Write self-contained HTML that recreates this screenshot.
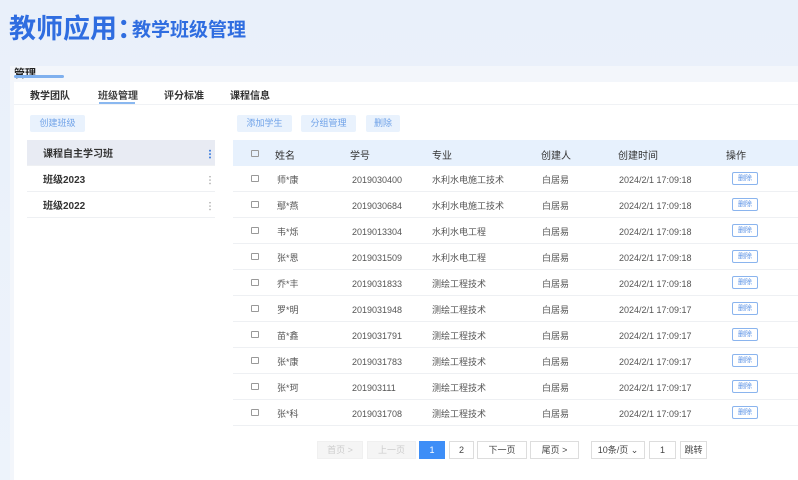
<!DOCTYPE html>
<html><head><meta charset="utf-8"><style>
*{margin:0;padding:0;box-sizing:border-box}
body{width:798px;height:480px;overflow:hidden;background:linear-gradient(180deg,#e9f0fa,#edf3fb);font-family:"Liberation Sans","Noto Sans CJK SC",sans-serif;position:relative;color:#333;line-height:1}
.a{position:absolute}
.t1{left:9px;top:15px;font-size:27px;line-height:28px;font-weight:bold;color:#2f6de0}
.t2{left:132px;top:21px;font-size:19px;line-height:20px;font-weight:bold;color:#2f6de0}
.panel{left:10px;top:66px;width:788px;height:414px;background:#f3f6fb}
.card{left:14px;top:82px;width:784px;height:398px;background:#fff}
.btn{position:absolute;height:17px;background:#e9f2fd;color:#6fa2e8;font-size:9px;line-height:17px;text-align:center;border-radius:2px}
.tab{position:absolute;top:91px;font-size:10px;line-height:11px;font-weight:bold;color:#333}
.row{position:absolute;left:233px;width:565px;height:26px;border-bottom:1px solid #eef0f3;font-size:9px;color:#555}
.row span{position:absolute;top:9px;line-height:10px}
.cb{position:absolute;left:18px;top:9px;width:8px;height:7px;border:1px solid #999;border-radius:1px}
.del{position:absolute;left:499px;top:6px;width:26px;height:13px;border:1px solid #8ab4ee;border-radius:2px;color:#5b93e6;font-size:7px;line-height:11px;text-align:center}
.lr{position:absolute;left:27px;width:188px;height:26px;border-bottom:1px solid #eef0f3;font-size:10px;line-height:11px;font-weight:bold;color:#333;padding:9px 0 0 16px}
.dots{position:absolute;right:4px;top:9px;width:2px;height:10px;background:radial-gradient(circle,#bbb 0.8px,transparent 1px) 0 0/2px 3.4px}
.pg{position:absolute;top:441px;height:18px;border:1px solid #ddd;font-size:9px;line-height:16px;text-align:center;color:#444;background:#fff}
.hd span{top:11px !important;line-height:11px}
</style></head><body>
<div class="a t1">教师应用：</div>
<div class="a t2">教学班级管理</div>
<div class="a panel"></div>
<div class="a" style="left:14px;top:68px;font-size:11px;line-height:12px;font-weight:bold;color:#222">管理</div>
<div class="a" style="left:14px;top:75px;width:50px;height:3px;background:#7fb0ee;border-radius:2px"></div>
<div class="a card"></div>
<div class="tab" style="left:30px">教学团队</div>
<div class="tab" style="left:98px;color:#444">班级管理</div>
<div class="a" style="left:99px;top:102px;width:36px;height:2px;background:#8ab8f0"></div>
<div class="tab" style="left:164px">评分标准</div>
<div class="tab" style="left:230px">课程信息</div>
<div class="a" style="left:14px;top:104px;width:784px;height:1px;background:#f0f2f5"></div>
<div class="btn" style="left:30px;top:115px;width:55px">创建班级</div>
<div class="btn" style="left:237px;top:115px;width:55px">添加学生</div>
<div class="btn" style="left:301px;top:115px;width:55px">分组管理</div>
<div class="btn" style="left:366px;top:115px;width:34px">删除</div>
<div class="lr" style="top:140px;background:#e8ebf3">课程自主学习班<div class="dots" style="background:radial-gradient(circle,#4a86e0 0.9px,transparent 1.1px) 0 0/2px 3.4px"></div></div>
<div class="lr" style="top:166px">班级2023<div class="dots"></div></div>
<div class="lr" style="top:192px">班级2022<div class="dots"></div></div>
<div class="row hd" style="top:140px;background:#e7f1fd;border:none;font-size:10px;color:#333"><div class="cb" style="left:18px;top:10px"></div><span style="left:42px">姓名</span><span style="left:117px">学号</span><span style="left:199px">专业</span><span style="left:308px">创建人</span><span style="left:385px">创建时间</span><span style="left:493px">操作</span></div>
<div class="row" style="top:166px"><div class="cb"></div><span style="left:44px">师*康</span><span style="left:119px">2019030400</span><span style="left:199px">水利水电施工技术</span><span style="left:309px">白居易</span><span style="left:386px">2024/2/1 17:09:18</span><div class="del">删除</div></div>
<div class="row" style="top:192px"><div class="cb"></div><span style="left:44px">鄢*燕</span><span style="left:119px">2019030684</span><span style="left:199px">水利水电施工技术</span><span style="left:309px">白居易</span><span style="left:386px">2024/2/1 17:09:18</span><div class="del">删除</div></div>
<div class="row" style="top:218px"><div class="cb"></div><span style="left:44px">韦*烁</span><span style="left:119px">2019013304</span><span style="left:199px">水利水电工程</span><span style="left:309px">白居易</span><span style="left:386px">2024/2/1 17:09:18</span><div class="del">删除</div></div>
<div class="row" style="top:244px"><div class="cb"></div><span style="left:44px">张*恩</span><span style="left:119px">2019031509</span><span style="left:199px">水利水电工程</span><span style="left:309px">白居易</span><span style="left:386px">2024/2/1 17:09:18</span><div class="del">删除</div></div>
<div class="row" style="top:270px"><div class="cb"></div><span style="left:44px">乔*丰</span><span style="left:119px">2019031833</span><span style="left:199px">测绘工程技术</span><span style="left:309px">白居易</span><span style="left:386px">2024/2/1 17:09:18</span><div class="del">删除</div></div>
<div class="row" style="top:296px"><div class="cb"></div><span style="left:44px">罗*明</span><span style="left:119px">2019031948</span><span style="left:199px">测绘工程技术</span><span style="left:309px">白居易</span><span style="left:386px">2024/2/1 17:09:17</span><div class="del">删除</div></div>
<div class="row" style="top:322px"><div class="cb"></div><span style="left:44px">苗*鑫</span><span style="left:119px">2019031791</span><span style="left:199px">测绘工程技术</span><span style="left:309px">白居易</span><span style="left:386px">2024/2/1 17:09:17</span><div class="del">删除</div></div>
<div class="row" style="top:348px"><div class="cb"></div><span style="left:44px">张*康</span><span style="left:119px">2019031783</span><span style="left:199px">测绘工程技术</span><span style="left:309px">白居易</span><span style="left:386px">2024/2/1 17:09:17</span><div class="del">删除</div></div>
<div class="row" style="top:374px"><div class="cb"></div><span style="left:44px">张*珂</span><span style="left:119px">201903111</span><span style="left:199px">测绘工程技术</span><span style="left:309px">白居易</span><span style="left:386px">2024/2/1 17:09:17</span><div class="del">删除</div></div>
<div class="row" style="top:400px"><div class="cb"></div><span style="left:44px">张*科</span><span style="left:119px">2019031708</span><span style="left:199px">测绘工程技术</span><span style="left:309px">白居易</span><span style="left:386px">2024/2/1 17:09:17</span><div class="del">删除</div></div>
<div class="pg" style="left:317px;width:46px;background:#f5f5f5;border-color:#f0f0f0;color:#ccc">首页 &gt;</div>
<div class="pg" style="left:367px;width:49px;background:#f5f5f5;border-color:#f0f0f0;color:#ccc">上一页</div>
<div class="pg" style="left:419px;width:26px;background:#3e8ef7;border-color:#3e8ef7;color:#fff">1</div>
<div class="pg" style="left:449px;width:25px">2</div>
<div class="pg" style="left:477px;width:50px">下一页</div>
<div class="pg" style="left:530px;width:49px">尾页 &gt;</div>
<div class="pg" style="left:591px;width:54px">10条/页 ⌄</div>
<div class="pg" style="left:649px;width:27px">1</div>
<div class="pg" style="left:680px;width:27px">跳转</div>
</body></html>
